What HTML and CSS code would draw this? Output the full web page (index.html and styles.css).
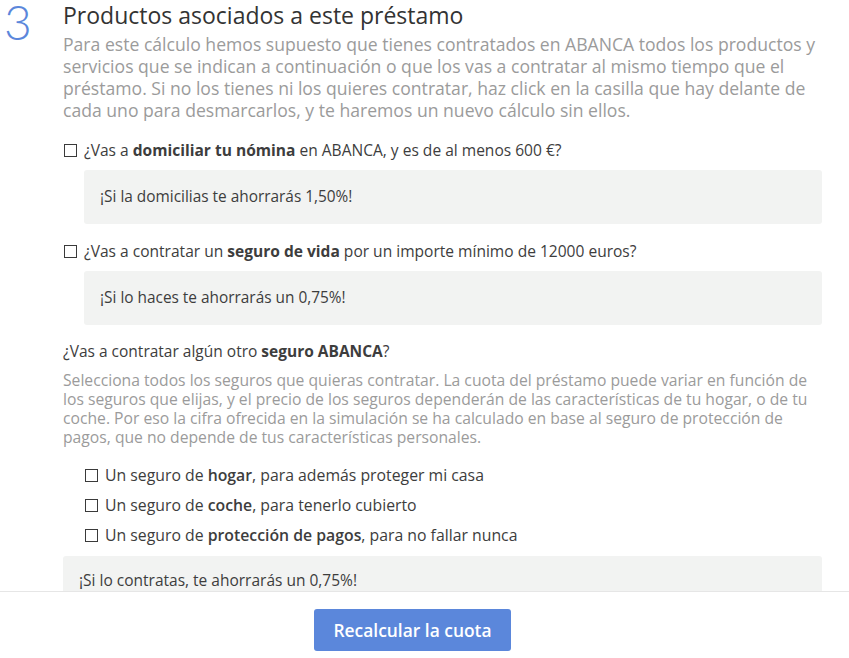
FILE: index.html
```html
<!DOCTYPE html>
<html>
	<head>
		<meta charset="UTF-8">
		<title>Productos asociados</title>
		<link rel="stylesheet" href="styles.css">
	</head>
	<body>
		<div id="wrap">
			<div class="step">3</div>
			<div class="main">
				<h2>Productos asociados a este préstamo</h2>
				<p class="intro">Para este cálculo hemos supuesto que tienes contratados en ABANCA todos los productos y servicios que se indican a continuación o que los vas a contratar al mismo tiempo que el préstamo. Si no los tienes ni los quieres contratar, haz click en la casilla que hay delante de cada uno para desmarcarlos, y te haremos un nuevo cálculo sin ellos.</p>

				<label class="check"><span class="box"></span>¿Vas a <b>domiciliar tu nómina</b> en ABANCA, y es de al menos 600 €?</label>
				<div class="save">¡Si la domicilias te ahorrarás 1,50%!</div>

				<label class="check"><span class="box"></span>¿Vas a contratar un <b>seguro de vida</b> por un importe mínimo de 12000 euros?</label>
				<div class="save">¡Si lo haces te ahorrarás un 0,75%!</div>

				<p class="question">¿Vas a contratar algún otro <b>seguro ABANCA</b>?</p>
				<p class="note">Selecciona todos los seguros que quieras contratar. La cuota del préstamo puede variar en función de los seguros que elijas, y el precio de los seguros dependerán de las características de tu hogar, o de tu coche. Por eso la cifra ofrecida en la simulación se ha calculado en base al seguro de protección de pagos, que no depende de tus características personales.</p>

				<div class="sub">
					<label class="check"><span class="box"></span>Un seguro de <b>hogar</b>, para además proteger mi casa</label>
					<label class="check"><span class="box"></span>Un seguro de <b>coche</b>, para tenerlo cubierto</label>
					<label class="check"><span class="box"></span>Un seguro de <b>protección de pagos</b>, para no fallar nunca</label>
				</div>
				<div class="save wide">¡Si lo contratas, te ahorrarás un 0,75%!</div>
			</div>
		</div>
		<div class="footer">
			<button class="btn">Recalcular la cuota</button>
		</div>
	</body>
</html>
```

FILE: styles.css
```css
*{
	margin: 0;
	padding: 0;
	box-sizing: border-box;
}
body{
	font-family: "Open Sans", "Noto Sans", sans-serif;
	color: #3a3a3a;
	background: #fff;
	overflow: hidden;
}
#wrap{
	display: grid;
	grid-template-columns: 63px 759px;
	padding-top: 3px;
}
.step{
	font-family: Lato, sans-serif;
	font-size: 48px;
	font-weight: 300;
	color: #5b87db;
	line-height: 48px;
	margin-top: -5px;
	padding-left: 4px;
}
.main h2{
	font-size: 23px;
	font-weight: 400;
	color: #333;
	line-height: 25px;
}
.intro{
	margin-top: 5px;
	font-size: 17.6px;
	line-height: 22px;
	color: #9b9b9b;
}
.check{
	display: block;
	font-size: 15.55px;
	line-height: 22px;
	color: #3d3d3d;
}
.check b{
	font-weight: 700;
}
.box{
	display: inline-block;
	vertical-align: -1px;
	width: 13px;
	height: 13px;
	border: 1px solid #3a3a3a;
	background: #fff;
	margin: 0 7px 0 1px;
}
.main > .check{
	margin-top: 16px;
}
.intro + .check{
	margin-top: 18px;
}
.save{
	margin: 9px 0 0 21px;
	background: #f2f3f2;
	border-radius: 3px;
	padding: 16px 16px;
	height: 54px;
	font-size: 15.4px;
	line-height: 21px;
	color: #3d3d3d;
}
.question{
	margin-top: 15px;
	font-size: 15.5px;
	line-height: 22px;
	color: #3d3d3d;
}
.note{
	margin-top: 9px;
	font-size: 15.7px;
	line-height: 19px;
	color: #9b9b9b;
}
.sub{
	margin-top: 13px;
	padding-left: 21px;
}
.sub .check{
	font-size: 15.8px;
	line-height: 30px;
}
.sub .check b{
	font-weight: 600;
}
.save.wide{
	margin: 6px 0 0 0;
	padding-top: 14px;
	height: 80px;
	font-size: 15.5px;
}
.footer{
	position: fixed;
	left: 0;
	right: 0;
	bottom: 0;
	height: 67px;
	background: #fff;
	border-top: 1px solid #e6e6e6;
	display: flex;
	justify-content: center;
	padding: 17px 24px 0 0;
}
.btn{
	width: 197px;
	height: 42px;
	background: #5b87db;
	color: #fff;
	border: 0;
	border-radius: 3px;
	font-family: "Open Sans", "Noto Sans", sans-serif;
	font-size: 17.4px;
	font-weight: 600;
	cursor: pointer;
}
```
